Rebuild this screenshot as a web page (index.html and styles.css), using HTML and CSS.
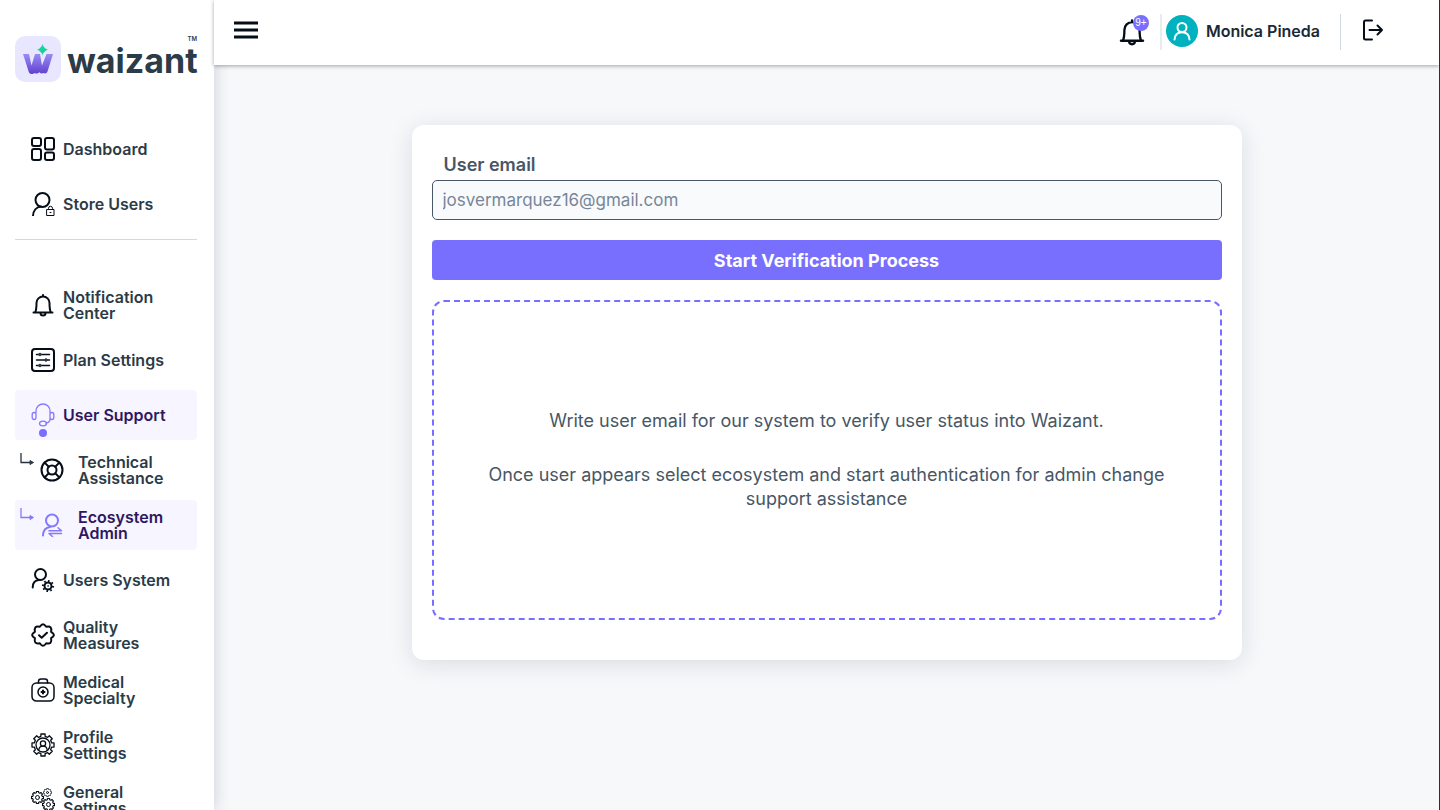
FILE: index.html
```html
<!DOCTYPE html>
<html lang="en">
<head>
<meta charset="utf-8">
<title>Waizant – Ecosystem Admin</title>
<meta name="viewport" content="width=device-width, initial-scale=1">
<link rel="stylesheet" href="styles.css">
</head>
<body>
<svg class="defs" aria-hidden="true">
  <symbol id="gear" viewBox="-12 -12 24 24"><path d="M-2.1-8.7V-11H2.1V-8.7L4.67-7.64 6.29-9.26 9.26-6.29 7.64-4.67 8.7-2.1H11V2.1H8.7L7.64 4.67 9.26 6.29 6.29 9.26 4.67 7.64 2.1 8.7V11H-2.1V8.7L-4.67 7.64-6.29 9.26-9.26 6.29-7.64 4.67-8.7 2.1H-11V-2.1H-8.7L-7.64-4.67-9.26-6.29-6.29-9.26-4.67-7.64Z"/></symbol>
  <symbol id="bell" viewBox="0 0 24 24"><path d="M2.500 19.500h19M4.200 19.300c1-2 1.300-4 1.300-9.300a6.500 6.500 0 0 1 13 0c0 5.300.3 7.300 1.300 9.300M9.500 20a2.500 2.500 0 0 0 5 0M12 2v1.500"/></symbol>
  <symbol id="branch" viewBox="0 0 14 12"><path d="M1 0v9.500h11"/><path class="solid" d="M10 7.500l3.500 2-3.500 2z"/></symbol>
</svg>
<div class="app">
  <aside class="sidebar">
    <a class="brand" href="#" aria-label="waizant">
      <svg class="brand-mark" viewBox="0 0 46 46">
        <defs><linearGradient id="violet" x1="0" y1="0" x2="0" y2="1"><stop offset="0" stop-color="#9a8cf5"/><stop offset="1" stop-color="#6140cf"/></linearGradient></defs>
        <rect width="46" height="46" rx="10" fill="#e9e7ff"/>
        <path fill="url(#violet)" d="M8 18h6l2.500 11.500L20 18h5l2 11.500L31.500 18H38l-5.500 17.500c-.8 2-2.500 2.500-4 1.500-1.500.8-3 .5-4-.8-1.500 1.400-3.500 1.800-5 .8-1.500 1.800-5 1.200-5.700-1z"/>
        <path fill="#16d39c" stroke="#e9e7ff" d="M27.500 7c1.200 4 2.300 5.200 6.500 6.700-4.200 1.500-5.300 2.700-6.500 6.800-1.200-4.100-2.300-5.300-6.500-6.800 4.200-1.500 5.300-2.700 6.500-6.700z"/>
      </svg>
      <span class="brand-name">waizant</span>
      <span class="brand-tm">TM</span>
    </a>
    <nav>
      <ul class="menu">
        <li><a class="item" href="#"><svg class="icon w2" viewBox="0 0 24 24"><rect x="1" y="1" width="9" height="8" rx="2"/><rect x="14" y="1" width="9" height="11.500" rx="2"/><rect x="1" y="12" width="9" height="11" rx="2"/><rect x="14" y="15.500" width="9" height="7.500" rx="2"/></svg>Dashboard</a></li>
        <li><a class="item" href="#"><svg class="icon" viewBox="0 0 24 24"><circle class="w2" cx="11.500" cy="8" r="7"/><path class="w2" d="M2 24c.2-5.500 3.500-9 8-9.500"/><path class="w1" d="M16 17.500h7v6h-7zM17.500 17.500v-1.200a2 2 0 0 1 4 0v1.200M19 20.500h1"/></svg>Store Users</a></li>
      </ul>
      <hr class="rule">
      <ul class="menu">
        <li><a class="item" href="#"><svg class="icon w2"><use href="#bell"/></svg>Notification Center</a></li>
        <li><a class="item" href="#"><svg class="icon w2" viewBox="0 0 24 24"><rect x="1" y="1" width="22" height="22" rx="3"/><path class="w15" d="M5.500 6.500h13M5.500 12h13M5.500 17.500h13"/><circle class="solid" cx="9" cy="6.500" r="1.300"/><circle class="solid" cx="15" cy="12" r="1.300"/><circle class="solid" cx="9" cy="17.500" r="1.300"/></svg>Plan Settings</a></li>
        <li><a class="item active" href="#"><svg class="icon" viewBox="0 0 24 24"><path d="M5 9.500V8a7 7 0 0 1 14 0v1.500M19 16c0 2-1.500 3.700-4 4"/><rect x="1.200" y="9.500" width="3.800" height="7" rx="1.900"/><rect x="19" y="9.500" width="3.800" height="7" rx="1.900"/><ellipse cx="12" cy="20.500" rx="3.500" ry="2.300"/></svg>User Support<span class="dot"></span></a></li>
        <li><a class="item sub" href="#"><svg class="branch"><use href="#branch"/></svg><svg class="icon w2" viewBox="0 0 24 24"><circle cx="12" cy="12" r="10.500"/><circle cx="12" cy="12" r="4.500"/><path d="M4.600 4.600l4.200 4.200M19.400 4.600l-4.200 4.200M4.600 19.400l4.200-4.200M19.400 19.400l-4.200-4.200"/></svg>Technical Assistance</a></li>
        <li><a class="item sub active" href="#" aria-current="page"><svg class="branch"><use href="#branch"/></svg><svg class="icon" viewBox="0 0 24 24"><circle class="w2" cx="12" cy="7.500" r="6"/><path class="w2" d="M3 22.500c.2-5 3-8 7-8.500"/><path class="w15" d="M9 17.700h12.500l-3.500-3M21.500 20.500H9l3.500 3"/></svg>Ecosystem Admin</a></li>
        <li><a class="item" href="#"><svg class="icon" viewBox="0 0 24 24"><circle class="w2" cx="9.500" cy="6.500" r="5.500"/><path class="w2" d="M1.700 19.500c0-4.500 2.500-7.200 6.300-7.500"/><circle class="w2" cx="17" cy="18" r="3.500"/><circle class="teeth" cx="17" cy="18" r="5.100" pathLength="80"/><circle class="solid" cx="17" cy="18" r=".3"/></svg>Users System</a></li>
        <li><a class="item" href="#"><svg class="icon w2" viewBox="0 0 24 24"><path d="M12 1.200q1.400 0 3.200 2.600 3.200-.8 4.300.5 1.200 1.200.6 4.500 2.800 1.800 2.800 3.200t-2.800 3.200q.6 3.200-.6 4.500-1.200 1.200-4.300.5Q13.400 22.800 12 22.800t-3.200-2.600q-3.200.8-4.300-.5-1.200-1.200-.6-4.500Q1.100 13.400 1.100 12t2.800-3.200q-.6-3.200.6-4.500 1.200-1.200 4.300-.5Q10.600 1.200 12 1.200z"/><path d="M8 12.200l2.700 2.600 5.300-5"/></svg>Quality Measures</a></li>
        <li><a class="item" href="#"><svg class="icon w15" viewBox="0 0 24 24"><rect x="1" y="5" width="22" height="18" rx="4.500"/><path d="M7.500 5V3.500q0-2.500 2.500-2.500h4q2.500 0 2.500 2.500V5"/><circle cx="12" cy="14" r="5"/><path class="w2" d="M12 12.500v3M10.500 14h3"/></svg>Medical Specialty</a></li>
        <li><a class="item" href="#"><svg class="icon" viewBox="0 0 24 24"><use href="#gear" width="24" height="24"/><circle cx="12" cy="12" r="7"/><circle cx="12" cy="10.500" r="2.600"/><path d="M7.800 17c.3-2.500 1.800-3.900 4.200-3.900s3.900 1.400 4.200 3.900"/></svg>Profile Settings</a></li>
        <li><a class="item" href="#"><svg class="icon w2" viewBox="0 0 24 24"><use href="#gear" x="0" y="3" width="13" height="13"/><circle class="w1" cx="6.500" cy="9.500" r="2"/><use href="#gear" x="12" y="0" width="9" height="9"/><circle class="w1" cx="16.500" cy="4.500" r="1"/><use href="#gear" x="11" y="10" width="13" height="13"/><circle class="w1" cx="17.500" cy="16.500" r="2"/></svg>General Settings</a></li>
      </ul>
    </nav>
  </aside>
  <div class="content">
    <header class="topbar">
      <button class="plain" type="button" aria-label="Toggle menu"><svg class="burger" viewBox="0 0 24 18"><path d="M0 2h24M0 9h24M0 16h24"/></svg></button>
      <div class="account">
        <button class="plain alerts" type="button" aria-label="Notifications"><svg class="bell"><use href="#bell"/></svg><span class="badge">9+</span></button>
        <div class="person">
          <svg class="avatar" viewBox="0 0 32 32"><circle cx="16" cy="16" r="16" fill="#00b1bf"/><g fill="none" stroke="#fff" stroke-width="2" stroke-linecap="round"><circle cx="16" cy="12.500" r="4.500"/><path d="M8.500 24.500c.4-4.500 3.200-7.300 7.500-7.300s7.100 2.800 7.500 7.300"/></g></svg>
          <span>Monica Pineda</span>
        </div>
        <button class="plain" type="button" aria-label="Log out"><svg class="logout" viewBox="0 0 24 24"><path d="M12 2.500H5.500Q4 2.500 4 4v16q0 1.500 1.500 1.500H12M9.500 12H22M17.500 7.500L22 12l-4.500 4.500"/></svg></button>
      </div>
    </header>
    <main class="main">
      <form class="card">
        <label class="label" for="email">User email</label>
        <input class="input" id="email" type="email" placeholder="josvermarquez16@gmail.com">
        <button class="submit" type="button">Start Verification Process</button>
        <div class="empty">
          <p>Write user email for our system to verify user status into Waizant.</p>
          <p>Once user appears select ecosystem and start authentication for admin change support assistance</p>
        </div>
      </form>
    </main>
  </div>
</div>
</body>
</html>
```
FILE: styles.css
```css
* { box-sizing: border-box; }
body { margin: 0; font-family: Inter, "Liberation Sans", sans-serif; color: #2b3b47; background: #f7f8fa; }
.defs { position: absolute; width: 0; height: 0; }
.app { display: flex; height: 100vh; overflow: hidden; border-right: 1px solid #2b2b42; }

.sidebar { flex: none; width: 214px; padding: 35px 17px 0 15px; background: #fff; overflow: hidden; box-shadow: 0 0 16px rgba(30, 35, 70, .2); }
.brand { position: relative; display: flex; align-items: center; gap: 6px; height: 47px; color: #2b3b47; text-decoration: none; }
.brand-mark { flex: none; width: 46px; height: 46px; }
.brand-name { padding-top: 4px; font-size: 34px; font-weight: 700; line-height: 36px; }
.brand-tm { position: absolute; top: 0; right: 0; font-size: 6px; font-weight: 600; line-height: 7px; }
.menu { display: grid; gap: 5px; margin: 0; padding: 0; list-style: none; }
nav { padding-top: 42px; }
.rule { margin: 10px 0 40px; border: 0; border-top: 1px solid #d0dae2; }
.item { position: relative; display: flex; align-items: center; gap: 8px; height: 50px; padding: 0 20px 0 16px; border-radius: 4px; color: #2b3b47; font-size: 16px; font-weight: 600; line-height: 16px; text-decoration: none; }
.item.sub { gap: 14px; padding-left: 25px; }
.item.active { background: #f7f5ff; color: #2e1760; }
.icon { flex: none; width: 24px; height: 24px; fill: none; stroke: #050e18; stroke-width: 1.3; stroke-linecap: round; stroke-linejoin: round; }
.active .icon, .active .branch { stroke: #8579ff; color: #8579ff; }
.w2 { stroke-width: 2; }
.w15 { stroke-width: 1.5; }
.w1 { stroke-width: 1; }
.teeth { stroke-width: 2; stroke-linecap: butt; stroke-dasharray: 4 6; }
.solid { fill: currentColor; stroke: currentColor; stroke-width: 1; }
.branch { position: absolute; left: 5px; top: 8px; width: 14px; height: 12px; fill: none; stroke: #26313b; stroke-width: 1.3; }
.branch .solid { stroke: none; }
.dot { position: absolute; left: 24px; bottom: 3px; width: 8px; height: 8px; border-radius: 50%; background: #786fff; }

.content { flex: 1; min-width: 0; display: flex; flex-direction: column; }
.topbar { display: flex; align-items: center; justify-content: space-between; height: 65px; padding: 0 55px 5px 20px; background: #fff; box-shadow: 0 1px 4px rgba(0, 0, 0, .35); }
.plain { display: flex; padding: 0; border: 0; background: none; }
.burger { width: 24px; height: 18px; stroke: #050e18; stroke-width: 3; }
.account { display: flex; align-items: center; }
.alerts { position: relative; margin: 4px 14px 0 0; }
.bell { width: 28px; height: 30px; fill: none; stroke: #050e18; stroke-width: 2; stroke-linecap: round; }
.badge { position: absolute; top: -2px; right: -3px; width: 16px; height: 16px; border-radius: 50%; background: #786fff; color: #fff; font-size: 10px; line-height: 16px; text-align: center; }
.person { display: flex; align-items: center; gap: 8px; height: 36px; margin-top: 4px; padding: 0 20px 2px 4px; border-left: 2px solid #e8ecf1; border-right: 1px solid #d0dae2; color: #1b2935; font-size: 16px; font-weight: 600; }
.avatar { width: 32px; height: 32px; }
.logout { width: 24px; height: 24px; margin-left: 19px; fill: none; stroke: #050e18; stroke-width: 2; stroke-linejoin: round; stroke-linecap: round; }

.main { flex: 1; padding: 60px 20px; }
.card { display: flex; flex-direction: column; max-width: 830px; margin: 0 auto; padding: 28px 20px 40px; border-radius: 12px; background: #fff; box-shadow: 0 4px 24px rgba(20, 25, 50, .12); }
.label { padding: 0 12px; color: #485666; font-size: 18px; font-weight: 600; line-height: 24px; }
.input { height: 40px; margin: 3px 0 20px; padding: 0 10px; border: 1px solid #485666; border-radius: 5px; background: #f9fafc; color: #485666; font: 17px Inter, "Liberation Sans", sans-serif; }
.input::placeholder { color: #76869a; opacity: 1; }
.submit { height: 40px; margin-bottom: 20px; border: 0; border-radius: 4px; background: #786fff; color: #fff; font: 700 18px Inter, "Liberation Sans", sans-serif; }
.empty { display: flex; flex-direction: column; justify-content: center; gap: 30px; min-height: 320px; padding: 0 48px; border: 2px dashed #786fff; border-radius: 12px; color: #485666; font-size: 18px; line-height: 24px; text-align: center; }
.empty p { margin: 0; }
```
